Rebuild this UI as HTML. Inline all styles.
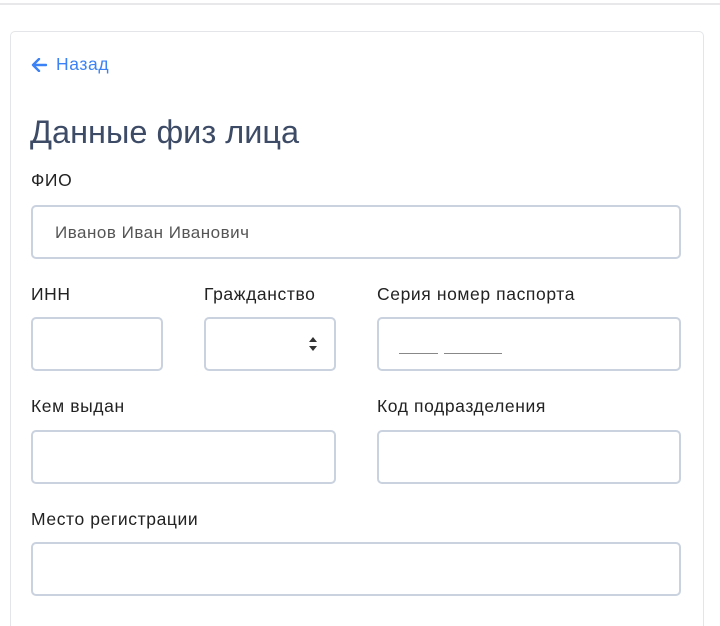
<!DOCTYPE html>
<html><head><meta charset="utf-8"><style>
html,body{margin:0;width:720px;height:626px;overflow:hidden}
body{background:#fff;font-family:"Liberation Sans",sans-serif;position:relative}
.top{position:absolute;left:0;right:0;top:0;height:3px;border-bottom:2px solid #e8e8ea}
.card{position:absolute;left:10px;top:31px;width:692px;height:594px;border:1px solid #e3e5e8;border-bottom:none;border-radius:5px 5px 0 0}
.a{position:absolute}
.back{left:31px;top:54px;color:#3b82f6;font-size:17.5px;letter-spacing:0.6px;display:flex;align-items:center;gap:9px}
h1{position:absolute;left:30px;top:114px;margin:0;font-weight:400;font-size:32.5px;color:#3d4b66}
.l{position:absolute;font-size:17.5px;letter-spacing:0.6px;color:#222}
.i{position:absolute;border:2px solid #c9d2de;border-radius:5px;box-sizing:border-box;height:54px}
</style></head><body>
<div class="top"></div>
<div class="card"></div>
<div class="a back"><svg width="16" height="14" viewBox="0 0 16 14"><path d="M8 1L2 7l6 6M2 7h13" stroke="#3b82f6" stroke-width="2.4" fill="none" stroke-linecap="round" stroke-linejoin="round"/></svg><span>Назад</span></div>
<h1>Данные физ лица</h1>
<div class="l" style="left:31px;top:170px">ФИО</div>
<div class="i" style="left:31px;top:205px;width:650px"><span style="position:absolute;left:22px;top:16px;font-size:17px;letter-spacing:0.5px;color:#555">Иванов Иван Иванович</span></div>
<div class="l" style="left:31px;top:284px">ИНН</div>
<div class="l" style="left:204px;top:284px">Гражданство</div>
<div class="l" style="left:377px;top:284px">Серия номер паспорта</div>
<div class="i" style="left:31px;top:317px;width:132px"></div>
<div class="i" style="left:204px;top:317px;width:132px"><svg style="position:absolute;left:102px;top:17px" width="10" height="16" viewBox="0 0 10 16"><path d="M5 1L9 6H1zM5 15L9 10H1z" fill="#333"/></svg></div>
<div class="i" style="left:377px;top:317px;width:304px"><div class="a" style="left:20px;top:34px;width:39px;border-top:1px solid #888"></div><div class="a" style="left:65px;top:34px;width:58px;border-top:1px solid #888"></div></div>
<div class="l" style="left:31px;top:396px">Кем выдан</div>
<div class="l" style="left:377px;top:396px">Код подразделения</div>
<div class="i" style="left:31px;top:430px;width:305px"></div>
<div class="i" style="left:377px;top:430px;width:304px"></div>
<div class="l" style="left:31px;top:509px">Место регистрации</div>
<div class="i" style="left:31px;top:542px;width:650px"></div>
</body></html>
